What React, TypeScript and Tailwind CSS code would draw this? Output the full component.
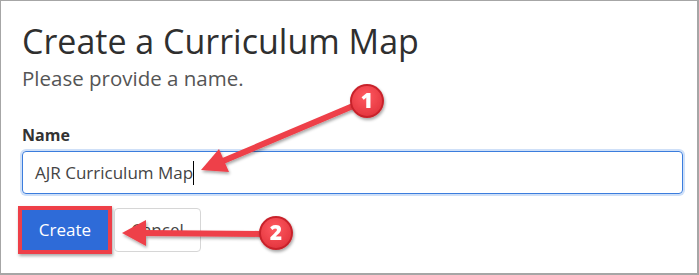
import React from "react";

const RED = "#ee3f48";

function Badge({ cx, cy, label }: { cx: number; cy: number; label: string }) {
  return (
    <g filter="url(#shadow)">
      <circle cx={cx} cy={cy} r={17} fill="#c8222c" />
      <circle cx={cx} cy={cy} r={15} fill="url(#badgeFill)" />
      <text
        x={cx}
        y={cy + 7}
        textAnchor="middle"
        fontSize="21"
        fontWeight="800"
        fill="#ffffff"
        fontFamily="'Open Sans', sans-serif"
      >
        {label}
      </text>
    </g>
  );
}

function Annotations() {
  return (
    <svg
      className="absolute inset-0 pointer-events-none"
      width="699"
      height="275"
      viewBox="0 0 699 275"
    >
      <defs>
        <filter id="shadow" x="-20%" y="-20%" width="140%" height="140%">
          <feDropShadow dx="1" dy="2" stdDeviation="1.5" floodColor="#000" floodOpacity="0.35" />
        </filter>
        <radialGradient id="badgeFill" cx="45%" cy="35%" r="70%">
          <stop offset="0%" stopColor="#ff5a61" />
          <stop offset="100%" stopColor="#e3343d" />
        </radialGradient>
      </defs>

      {/* arrow 1: badge -> input text */}
      <g filter="url(#shadow)">
        <line x1="222" y1="160" x2="352" y2="105" stroke={RED} strokeWidth="6" strokeLinecap="round" />
        <polygon points="200,169 218,148 228,171" fill={RED} />
      </g>

      {/* arrow 2: badge -> create button */}
      <g filter="url(#shadow)">
        <line x1="142" y1="232" x2="262" y2="233" stroke={RED} strokeWidth="6" strokeLinecap="round" />
        <polygon points="121,232 145,219 145,245" fill={RED} />
      </g>

      <Badge cx={366} cy={100} label="1" />
      <Badge cx={275} cy={232} label="2" />
    </svg>
  );
}

export default function App() {
  return (
    <div
      className="relative w-[699px] h-[275px] bg-white border border-r-2 border-b-2 border-[#a6a6a6] overflow-hidden"
      style={{ fontFamily: "'Open Sans', 'Noto Sans', sans-serif" }}
    >
      <div className="pl-[21px] pt-[20px] pr-[15px]">
        <h1 className="text-[34px] leading-[40px] text-[#2f2f2f] font-normal">
          Create a Curriculum Map
        </h1>
        <p className="mt-[5px] text-[20.5px] leading-[24px] text-[#555555]">
          Please provide a name.
        </p>

        <label className="block mt-[35px] text-[16px] leading-[20px] font-bold text-[#333333]">
          Name
        </label>
        <div className="mt-[6px] w-[661px] h-[43px] flex items-center px-[12px] border border-[#3b7ddd] rounded-[4px] ring-2 ring-[#cfe0f8]">
          <span className="text-[17px] text-[#444444]">AJR Curriculum Map</span>
          <span className="w-px h-[24px] bg-black" />
        </div>

        <div className="mt-[12px] flex items-center">
          <div className="-ml-[4px] border-4 border-[#ee3f48] shadow-[1px_2px_3px_rgba(0,0,0,0.35)]">
            <button className="w-[86px] h-[40px] bg-[#2e6bd8] text-white text-[17px]">
              Create
            </button>
          </div>
          <button className="ml-[2px] w-[87px] h-[44px] border border-[#d6d6d6] rounded-[4px] bg-white text-[#444444] text-[17px]">
            Cancel
          </button>
        </div>
      </div>
      <Annotations />
    </div>
  );
}
